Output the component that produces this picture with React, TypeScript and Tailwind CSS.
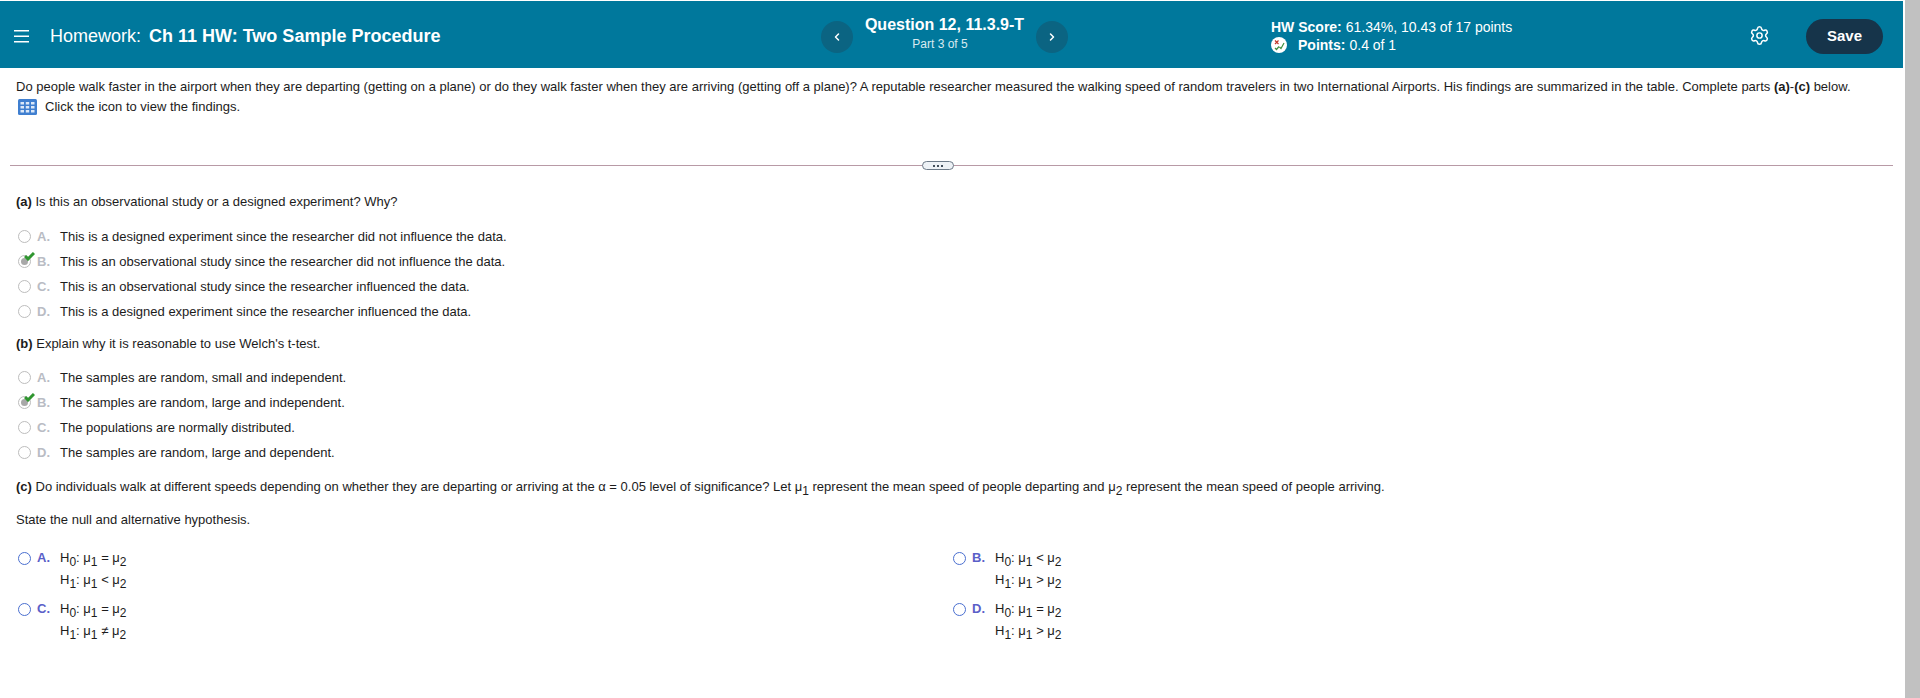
import { ChevronLeft, ChevronRight, Settings } from "lucide-react";

const partA = [
   ["A.", "This is a designed experiment since the researcher did not influence the data."],
   ["B.", "This is an observational study since the researcher did not influence the data."],
   ["C.", "This is an observational study since the researcher influenced the data."],
   ["D.", "This is a designed experiment since the researcher influenced the data."],
];

const partB = [
   ["A.", "The samples are random, small and independent."],
   ["B.", "The samples are random, large and independent."],
   ["C.", "The populations are normally distributed."],
   ["D.", "The samples are random, large and dependent."],
];

const partC = [
   ["A.", "=", "<"],
   ["B.", "<", ">"],
   ["C.", "=", "≠"],
   ["D.", "=", ">"],
];

function GradedOption({ letter, text, correct }: { letter: string; text: string; correct: boolean }) {
   return (
      <div className="flex items-center h-[25px]">
         <span className="relative w-[13px] h-[13px] ml-[2px] rounded-full border-[1.5px] border-[#bdbdbd] flex items-center justify-center">
            {correct && (
               <>
                  <span className="w-[7px] h-[7px] rounded-full bg-[#a8a8a8]" />
                  <svg className="absolute -top-[4px] left-[5px]" width="11" height="9" viewBox="0 0 11 9">
                     <path d="M1 4 L4 7 L10 1" fill="none" stroke="#2f962f" strokeWidth="3" />
                  </svg>
               </>
            )}
         </span>
         <span className="w-[23px] ml-[6px] font-bold text-[#b9bcc4]">{letter}</span>
         <span>{text}</span>
      </div>
   );
}

function Sub({ children }: { children: number }) {
   return <sub className="text-[12px] -bottom-[4px]">{children}</sub>;
}

function Mu({ n }: { n: number }) {
   return (
      <>
         μ<Sub>{n}</Sub>
      </>
   );
}

function HypothesisOption({ letter, h0, h1 }: { letter: string; h0: string; h1: string }) {
   return (
      <div className="flex">
         <span className="w-[13px] h-[13px] mt-[5px] ml-[2px] rounded-full border-[1.5px] border-[#4a6fd0]" />
         <span className="w-[23px] ml-[6px] font-bold text-[#5a60c8] leading-[21px]">{letter}</span>
         <div className="leading-[22px]">
            <div className="h-[22px]">
               H<Sub>{0}</Sub>: <Mu n={1} /> {h0} <Mu n={2} />
            </div>
            <div className="h-[22px]">
               H<Sub>{1}</Sub>: <Mu n={1} /> {h1} <Mu n={2} />
            </div>
         </div>
      </div>
   );
}

export default function App() {
   return (
      <div className="h-[698px] overflow-hidden flex bg-white text-[13px] text-[#1c1c1c] font-['Liberation_Sans',Arial,sans-serif]">
         <div className="w-[1903px] flex-none">
            <header className="mt-[1px] h-[67px] bg-[#00789c] text-white flex items-center">
               <div className="w-[821px] flex-none flex items-center pl-[14px] pt-[3px]">
                  <svg width="15" height="13" viewBox="0 0 15 13" fill="#fff">
                     <rect y="0" width="15" height="1.5" />
                     <rect y="5.5" width="15" height="1.5" />
                     <rect y="11" width="15" height="1.5" />
                  </svg>
                  <span className="ml-[21px] text-[18px]">Homework:</span>
                  <span className="ml-[8px] text-[18px] font-bold">Ch 11 HW: Two Sample Procedure</span>
               </div>
               <div className="w-[247px] flex-none flex items-center justify-between">
                  <button className="w-[32px] h-[32px] mt-[5px] rounded-full bg-[#0b6482] flex items-center justify-center">
                     <ChevronLeft size={12} strokeWidth={3} />
                  </button>
                  <div className="text-center">
                     <div className="text-[16px] font-bold leading-[19px]">Question 12, 11.3.9-T</div>
                     <div className="pr-[9px] text-[12px] leading-[20px] text-[#d9eaf0]">Part 3 of 5</div>
                  </div>
                  <button className="w-[32px] h-[32px] mt-[5px] rounded-full bg-[#0b6482] flex items-center justify-center">
                     <ChevronRight size={12} strokeWidth={3} />
                  </button>
               </div>
               <div className="ml-[203px] mt-[3px] text-[14px] leading-[18px]">
                  <div>
                     <span className="font-bold">HW Score:</span> 61.34%, 10.43 of 17 points
                  </div>
                  <div className="flex items-center">
                     <svg width="16" height="16" viewBox="0 0 16 16">
                        <circle cx="8" cy="8" r="8" fill="#fff" />
                        <path d="M4 3.5 L7.5 7 M7.5 3.5 L4 7" stroke="#c0392b" strokeWidth="1.2" />
                        <path d="M4 11 L5.5 12.5 L8 9.5 M8.5 10 L10 11.5 L13 6" fill="none" stroke="#3f8f3f" strokeWidth="1.2" />
                     </svg>
                     <span className="ml-[11px] font-bold">Points:</span>
                     <span className="ml-[4px]">0.4 of 1</span>
                  </div>
               </div>
               <Settings size={21} strokeWidth={1.7} className="ml-auto mt-[2px]" />
               <button className="ml-[36px] mr-[20px] mt-[4px] w-[77px] h-[35px] rounded-full bg-[#16344a] text-[15px] font-bold">Save</button>
            </header>

            <main className="px-[10px]">
               <div className="pl-[6px] pt-[9px] leading-[19px]">
                  <p className="whitespace-nowrap mb-[1px]">
                     Do people walk faster in the airport when they are departing (getting on a plane) or do they walk faster when they are arriving (getting off a plane)? A reputable researcher measured the walking speed of random travelers in two International Airports. His findings are summarized in the table. Complete parts <b>(a)</b>-<b>(c)</b> below.
                  </p>
                  <p className="flex items-center">
                     <svg className="ml-[2px] mr-[8px]" width="19" height="16" viewBox="0 0 19 16">
                        <rect width="19" height="16" rx="1.5" fill="#3f7fd0" />
                        <path d="M2.5 3h3.5v2.6H2.5zM7.8 3h3.4v2.6H7.8zM13 3h3.5v2.6H13zM2.5 7h3.5v2.6H2.5zM7.8 7h3.4v2.6H7.8zM13 7h3.5v2.6H13zM2.5 11h3.5v2.6H2.5zM7.8 11h3.4v2.6H7.8zM13 11h3.5v2.6H13z" fill="#dbe8f8" />
                     </svg>
                     Click the icon to view the findings.
                  </p>
               </div>

               <div className="relative mt-[49px] h-px bg-[#b89aa6]">
                  <span className="absolute left-[912px] -top-[4px] w-[32px] h-[9px] rounded-full border border-[#6d7a88] bg-[#eef2f6] flex items-center justify-center gap-[2px]">
                     <i className="w-[2px] h-[2px] bg-[#44505c]" />
                     <i className="w-[2px] h-[2px] bg-[#44505c]" />
                     <i className="w-[2px] h-[2px] bg-[#44505c]" />
                  </span>
               </div>

               <div className="pl-[6px] leading-[19px]">
                  <p className="mt-[26px] h-[19px]">
                     <b>(a)</b> Is this an observational study or a designed experiment? Why?
                  </p>
                  <div className="mt-[13px]">
                     {partA.map(([letter, text]) => (
                        <GradedOption key={letter} letter={letter} text={text} correct={letter === "B."} />
                     ))}
                  </div>

                  <p className="mt-[10px] h-[19px]">
                     <b>(b)</b> Explain why it is reasonable to use Welch's t-test.
                  </p>
                  <div className="mt-[12px]">
                     {partB.map(([letter, text]) => (
                        <GradedOption key={letter} letter={letter} text={text} correct={letter === "B."} />
                     ))}
                  </div>

                  <p className="mt-[12px] h-[19px] whitespace-nowrap">
                     <b>(c)</b> Do individuals walk at different speeds depending on whether they are departing or arriving at the α = 0.05 level of significance? Let <Mu n={1} /> represent the mean speed of people departing and <Mu n={2} /> represent the mean speed of people arriving.
                  </p>
                  <p className="mt-[14px] h-[19px]">State the null and alternative hypothesis.</p>

                  <div className="mt-[18px] grid grid-cols-[935px_1fr] gap-y-[7px]">
                     {partC.map(([letter, h0, h1]) => (
                        <HypothesisOption key={letter} letter={letter} h0={h0} h1={h1} />
                     ))}
                  </div>
               </div>
            </main>
         </div>
         <div className="ml-[2px] flex-1 bg-[#c1c1c1]" />
      </div>
   );
}
